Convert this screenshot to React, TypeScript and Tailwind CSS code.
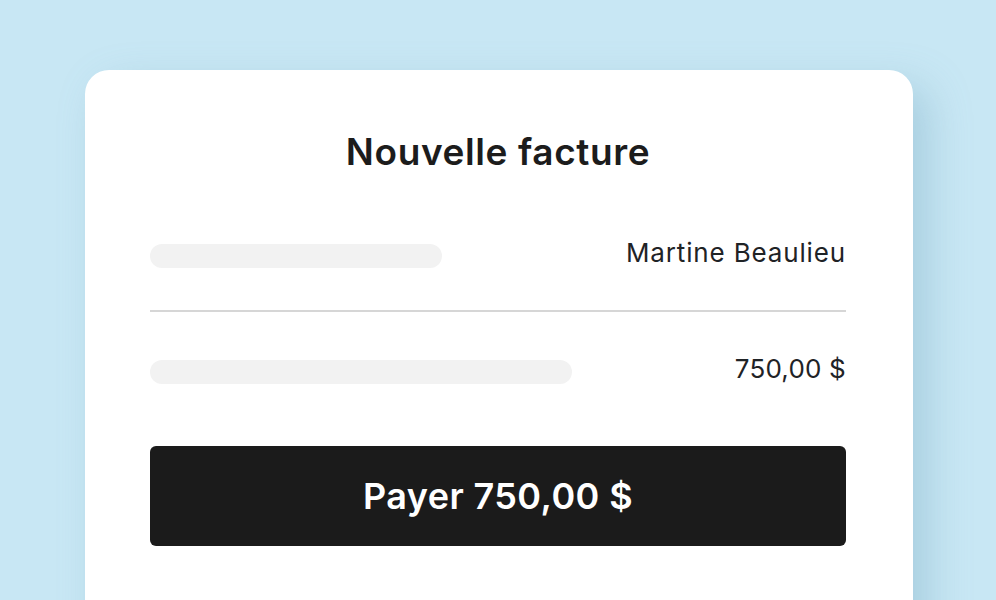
import React from 'react';

const Placeholder: React.FC<{ width: string }> = ({ width }) => (
  <div className={`h-6 rounded-full bg-[#f2f2f2] ${width}`} />
);

export default function App() {
  return (
    <div
      className="h-[600px] w-[996px] overflow-hidden bg-[#c8e7f4] pt-[70px] pl-[85px]"
      style={{ fontFamily: 'Inter, "Noto Sans", sans-serif' }}
    >
      <div className="h-[600px] w-[828px] rounded-[24px] bg-white pl-[65px] pr-[67px] pt-[58px] shadow-[16px_16px_40px_rgba(110,160,185,0.35)]">
        {/* Title */}
        <h1 className="text-center text-[37px] font-semibold leading-[48px] tracking-[0.6px] text-[#1c1c1c]">
          Nouvelle facture
        </h1>

        {/* Customer row */}
        <div className="mt-[56px] flex h-[48px] items-center justify-between">
          <Placeholder width="w-[292px]" />
          <span className="pb-[8px] text-[26px] tracking-[0.85px] text-[#1f2326]">Martine Beaulieu</span>
        </div>

        <div className="mt-[30px] h-[2px] bg-[#d6d6d6]" />

        {/* Amount row */}
        <div className="mt-[36px] flex h-[48px] items-center justify-between">
          <Placeholder width="w-[422px]" />
          <span className="pb-[8px] text-[26px] tracking-[0.2px] text-[#1f2326]">750,00 $</span>
        </div>

        {/* Pay button */}
        <button className="mt-[50px] flex h-[100px] w-full items-center justify-center rounded-[6px] bg-[#1b1b1b] text-[36px] font-semibold tracking-[0.4px] text-white">
          Payer 750,00 $
        </button>
      </div>
    </div>
  );
}
